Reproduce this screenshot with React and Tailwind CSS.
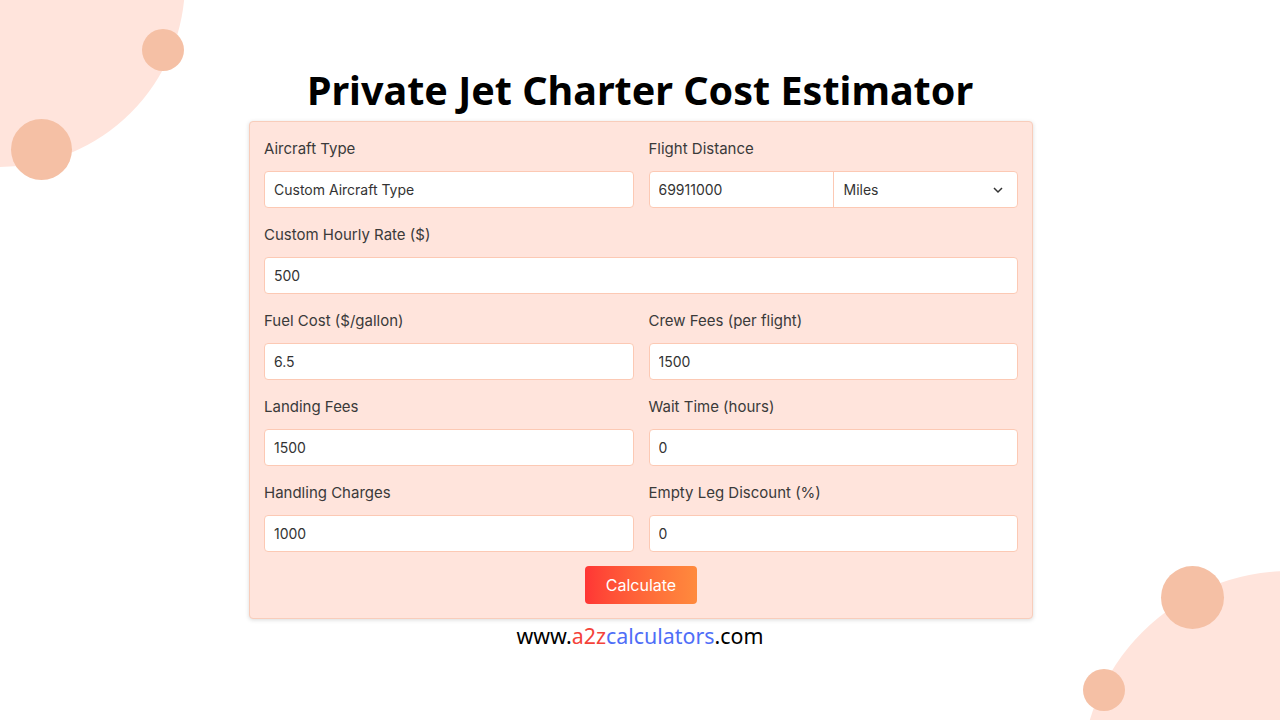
import React, { useState } from "react";

const Field = ({ label, value, onChange }) => (
  <div className="flex flex-col">
    <label className="text-[15px] leading-5 text-[#3a3a3a] mb-3">{label}</label>
    <input
      value={value}
      onChange={(e) => onChange(e.target.value)}
      className="h-[37px] w-full rounded-[4px] border border-[#fcc9b4] bg-white px-[9px] text-[14px] text-[#333] outline-none"
    />
  </div>
);

const App = () => {
  const [form, setForm] = useState({
    aircraft: "Custom Aircraft Type",
    distance: "69911000",
    unit: "Miles",
    rate: "500",
    fuel: "6.5",
    crew: "1500",
    landing: "1500",
    wait: "0",
    handling: "1000",
    discount: "0",
  });

  const set = (key) => (v) => setForm({ ...form, [key]: v });

  return (
    <div
      className="relative w-full h-[720px] overflow-hidden bg-white"
      style={{ fontFamily: "Inter, 'Noto Sans', sans-serif" }}
    >
      {/* background circles */}
      <div className="absolute -left-[185px] -top-[203px] w-[370px] h-[370px] rounded-full bg-[#ffe4dc]"></div>
      <div className="absolute left-[142px] top-[29px] w-[42px] h-[42px] rounded-full bg-[#f5c0a5]"></div>
      <div className="absolute left-[11px] top-[119px] w-[61px] h-[61px] rounded-full bg-[#f5c0a5]"></div>
      <div className="absolute left-[1081px] top-[571px] w-[418px] h-[418px] rounded-full bg-[#ffe4dc]"></div>
      <div className="absolute left-[1161px] top-[566px] w-[63px] h-[63px] rounded-full bg-[#f5c0a5]"></div>
      <div className="absolute left-[1083px] top-[669px] w-[42px] h-[42px] rounded-full bg-[#f5c0a5]"></div>

      <div className="relative flex flex-col items-center pt-[64px]">
        <h1
          className="text-[39.5px] leading-[52px] font-bold text-black"
          style={{ fontFamily: "'Noto Sans', sans-serif" }}
        >
          Private Jet Charter Cost Estimator
        </h1>

        <div className="mt-[5px] ml-[2px] w-[784px] rounded-[4px] border border-[#f8cdbb] bg-[#ffe4dc] px-[14px] pt-[17px] pb-[14px] shadow-[0_1px_4px_rgba(0,0,0,0.15)]">
          <div className="grid grid-cols-2 gap-x-[15px] gap-y-[17px]">
            <Field label="Aircraft Type" value={form.aircraft} onChange={set("aircraft")} />
            <div className="flex flex-col">
              <label className="text-[15px] leading-5 text-[#3a3a3a] mb-3">Flight Distance</label>
              <div className="flex h-[37px] rounded-[4px] border border-[#fcc9b4] bg-white">
                <input
                  value={form.distance}
                  onChange={(e) => set("distance")(e.target.value)}
                  className="w-[184px] h-full px-[9px] text-[14px] text-[#333] outline-none rounded-l-[4px] border-r border-[#fcc9b4]"
                />
                <div className="relative flex-1 flex items-center">
                  <select
                    value={form.unit}
                    onChange={(e) => set("unit")(e.target.value)}
                    className="appearance-none w-full h-full bg-transparent px-[10px] text-[14px] text-[#333] outline-none"
                  >
                    <option>Miles</option>
                    <option>Kilometers</option>
                  </select>
                  <svg
                    className="absolute right-[13px] pointer-events-none"
                    width="12"
                    height="12"
                    viewBox="0 0 12 12"
                    fill="none"
                    stroke="#333"
                    strokeWidth="1.5"
                  >
                    <path d="M2 4 L6 8 L10 4" />
                  </svg>
                </div>
              </div>
            </div>

            <div className="col-span-2">
              <Field label="Custom Hourly Rate ($)" value={form.rate} onChange={set("rate")} />
            </div>

            <Field label="Fuel Cost ($/gallon)" value={form.fuel} onChange={set("fuel")} />
            <Field label="Crew Fees (per flight)" value={form.crew} onChange={set("crew")} />
            <Field label="Landing Fees" value={form.landing} onChange={set("landing")} />
            <Field label="Wait Time (hours)" value={form.wait} onChange={set("wait")} />
            <Field label="Handling Charges" value={form.handling} onChange={set("handling")} />
            <Field label="Empty Leg Discount (%)" value={form.discount} onChange={set("discount")} />
          </div>

          <div className="flex justify-center mt-[14px]">
            <button className="w-[112px] h-[38px] rounded-[4px] bg-gradient-to-r from-[#ff3535] to-[#ff8a3d] text-white text-[16px]">
              Calculate
            </button>
          </div>
        </div>

        <div
          className="mt-[3px] text-[21.4px] leading-[28px] text-black"
          style={{ fontFamily: "'Noto Sans', sans-serif" }}
        >
          www.<span className="text-[#f4433a]">a2z</span>
          <span className="text-[#4f6ef7]">calculators</span>.com
        </div>
      </div>
    </div>
  );
};

export default App;
